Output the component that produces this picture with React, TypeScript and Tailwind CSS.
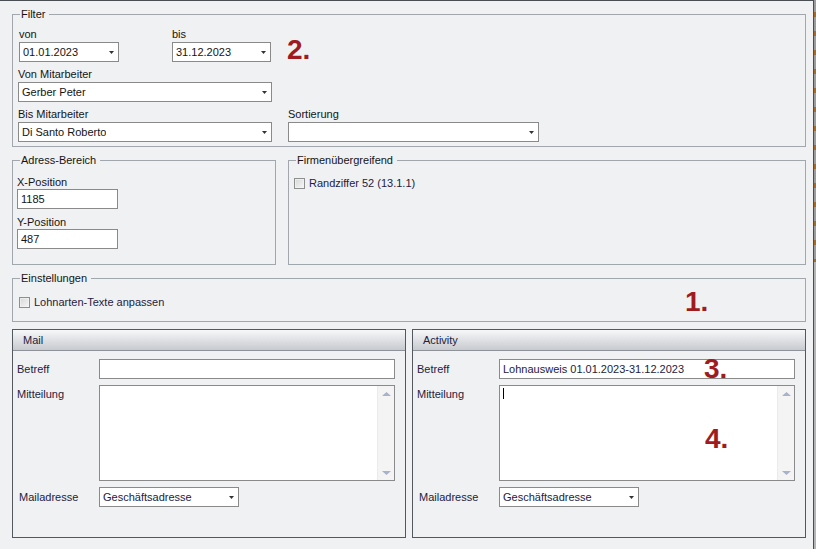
import type { ReactNode } from "react";

function Arrow() {
  return (
    <svg width="5" height="3" viewBox="0 0 5 3" className="shrink-0">
      <path d="M0 0H5L2.5 3Z" fill="#333" />
    </svg>
  );
}

function Combo({ w, value }: { w: string; value?: string }) {
  return (
    <div
      className={`${w} h-[20px] border border-[#8a8a8a] bg-white flex items-center justify-between pl-[3px] pr-[4px]`}
    >
      <span className="truncate">{value}</span>
      <Arrow />
    </div>
  );
}

function TextBox({ w, value }: { w: string; value?: string }) {
  return (
    <div className={`${w} h-[20px] border border-[#8a8a8a] bg-white flex items-center pl-[3px]`}>
      {value}
    </div>
  );
}

function CheckBox() {
  return (
    <span className="w-[13px] h-[13px] flex items-center justify-center shrink-0">
      <span className="w-[11px] h-[11px] border border-[#8e8f8f] bg-gradient-to-br from-[#d6d7d8] to-[#f7f7f7] border-box">
        <span className="block w-full h-full border border-[#f4f4f4]/70" />
      </span>
    </span>
  );
}

function GroupBox({
  title,
  className,
  bodyClassName,
  children,
}: {
  title: string;
  className?: string;
  bodyClassName?: string;
  children?: ReactNode;
}) {
  return (
    <fieldset className={`border border-[#a2a7ad] ${className ?? ""}`}>
      <legend className="ml-[7px] pl-[1px] pr-[4px] leading-[13px] text-[#141414]">{title}</legend>
      <div className={bodyClassName}>{children}</div>
    </fieldset>
  );
}

function Memo({ caret }: { caret?: boolean }) {
  return (
    <div className="w-[296px] h-[96px] border border-[#8a8a8a] bg-white flex">
      <div className="flex-1 pl-[3px] pt-[2px]">
        {caret && <div className="w-px h-[11px] bg-black" />}
      </div>
      <div className="w-[17px] bg-[#f4f4f5] border-l border-[#ebebec] flex flex-col items-center justify-between pt-[6px] pb-[5px]">
        <svg width="9" height="4" viewBox="0 0 9 4">
          <path d="M4.5 0L9 4H0Z" fill="#a8b2c8" />
        </svg>
        <svg width="9" height="4" viewBox="0 0 9 4">
          <path d="M0 0H9L4.5 4Z" fill="#a8b2c8" />
        </svg>
      </div>
    </div>
  );
}

function Panel({
  title,
  subject,
  caret,
}: {
  title: string;
  subject?: string;
  caret?: boolean;
}) {
  return (
    <div className="w-[394px] h-[209px] border border-[#53575e] flex flex-col">
      <div className="h-[21px] shrink-0 border-b border-[#8f9399] bg-gradient-to-b from-[#f7f8f9] to-[#c7cacf] flex items-center pl-[10px] text-[#1e2140]">
        {title}
      </div>
      <div className="flex-1 pl-[4px] pt-[8px] text-[#1e2140]">
        <div className="flex items-center">
          <span className="w-[82px]">Betreff</span>
          <TextBox w="w-[296px]" value={subject} />
        </div>
        <div className="flex mt-[6px]">
          <span className="w-[82px] pt-[3px]">Mitteilung</span>
          <Memo caret={caret} />
        </div>
        <div className="flex items-center mt-[6px]">
          <span className="w-[82px] pl-[2px]">Mailadresse</span>
          <Combo w="w-[140px]" value="Geschäftsadresse" />
        </div>
      </div>
    </div>
  );
}

function Mark({ n, className }: { n: string; className: string }) {
  return (
    <span className={`absolute text-[28px] leading-none font-bold text-[#9f1b20] ${className}`}>{n}</span>
  );
}

export default function App() {
  return (
    <div className="w-[816px] h-[549px] flex bg-[#f0f1f3] font-['Liberation_Sans',Arial,sans-serif] text-[11px] leading-[13px] text-[#141414] overflow-hidden">
      <div className="relative w-[814px] h-full border-t border-r border-[#4a4d52] pl-[12px] pr-[7px] flex flex-col">
        <GroupBox title="Filter" className="mt-[7px]" bodyClassName="pl-[5px] pt-[7px] pb-[4px]">
          <div className="flex">
            <div className="ml-[1px] w-[153px]">
              <div>von</div>
              <div className="mt-[1px]">
                <Combo w="w-[100px]" value="01.01.2023" />
              </div>
            </div>
            <div>
              <div>bis</div>
              <div className="mt-[1px]">
                <Combo w="w-[99px]" value="31.12.2023" />
              </div>
            </div>
          </div>
          <div className="mt-[6px]">
            <div>Von Mitarbeiter</div>
            <div className="mt-[1px]">
              <Combo w="w-[254px]" value="Gerber Peter" />
            </div>
          </div>
          <div className="mt-[6px] flex gap-[16px]">
            <div>
              <div>Bis Mitarbeiter</div>
              <div className="mt-[1px]">
                <Combo w="w-[254px]" value="Di Santo Roberto" />
              </div>
            </div>
            <div>
              <div>Sortierung</div>
              <div className="mt-[1px]">
                <Combo w="w-[251px]" />
              </div>
            </div>
          </div>
        </GroupBox>

        <div className="mt-[7px] flex gap-[12px]">
          <GroupBox title="Adress-Bereich" className="w-[264px]" bodyClassName="pl-[4px] pt-[9px] pb-[15px]">
            <div>X-Position</div>
            <TextBox w="w-[101px]" value="1185" />
            <div className="mt-[7px]">Y-Position</div>
            <TextBox w="w-[101px]" value="487" />
          </GroupBox>
          <GroupBox title="Firmenübergreifend" className="flex-1" bodyClassName="pl-[4px] pt-[10px]">
            <div className="flex items-center gap-[3px] text-[#1e2140]">
              <CheckBox />
              <span>Randziffer 52 (13.1.1)</span>
            </div>
          </GroupBox>
        </div>

        <GroupBox title="Einstellungen" className="mt-[7px]" bodyClassName="pl-[5px] pt-[11px] pb-[12px]">
          <div className="flex items-center gap-[3px] text-[#1e2140]">
            <CheckBox />
            <span>Lohnarten-Texte anpassen</span>
          </div>
        </GroupBox>

        <div className="mt-[7px] flex gap-[6px]">
          <Panel title="Mail" />
          <Panel title="Activity" subject="Lohnausweis 01.01.2023-31.12.2023" caret />
        </div>

        <Mark n="2." className="left-[287px] top-[35px]" />
        <Mark n="1." className="left-[685px] top-[287px]" />
        <Mark n="3." className="left-[704px] top-[354px]" />
        <Mark n="4." className="left-[705px] top-[424px]" />
      </div>
      <div className="w-[2px] h-full flex flex-col">
        <div className="h-[262px] bg-[repeating-linear-gradient(to_bottom,#9c9c9c_0px,#9c9c9c_12px,#a26a2c_12px,#a26a2c_17px,#9c9c9c_17px,#9c9c9c_19px)]" />
        <div className="flex-1 bg-[#b5b5b5]" />
      </div>
    </div>
  );
}
